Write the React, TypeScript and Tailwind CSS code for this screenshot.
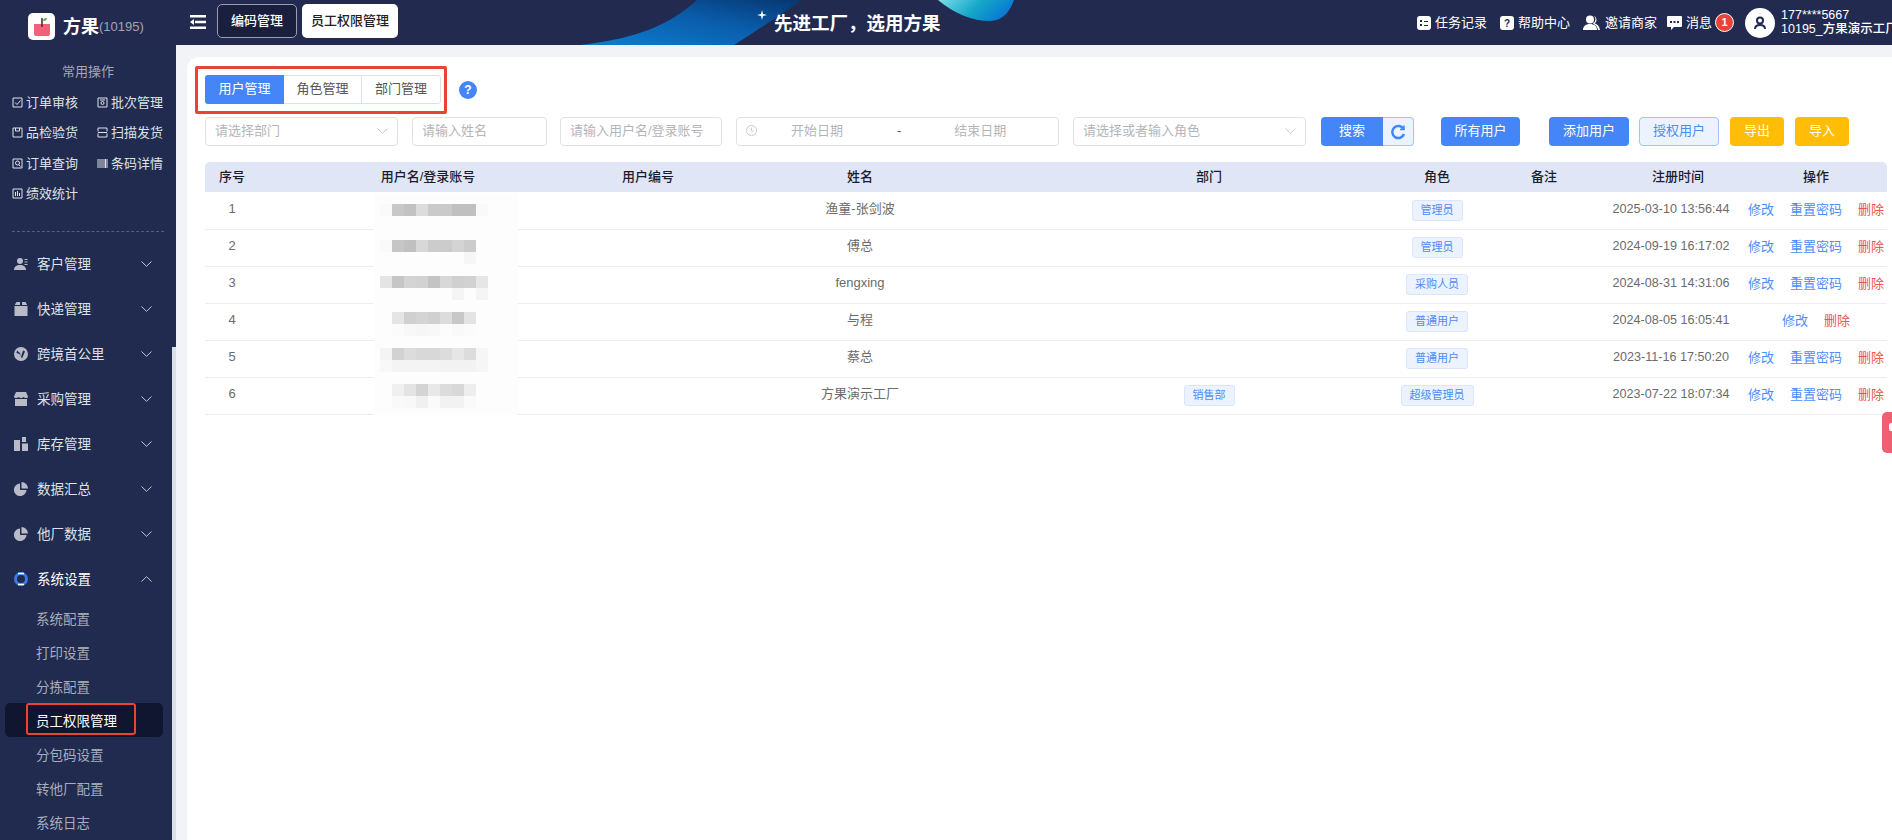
import React from "react";

const font = { fontFamily: '"Liberation Sans", "Noto Sans CJK SC", sans-serif' };

const Chevron = ({ up = false }: { up?: boolean }) => (
  <svg width="11" height="6" viewBox="0 0 11 6" fill="none" stroke="#c3c6d2" strokeWidth="1">
    <path d={up ? "M0.5 5.5 L5.5 0.7 L10.5 5.5" : "M0.5 0.5 L5.5 5.3 L10.5 0.5"} />
  </svg>
);

const quickIcons: Record<string, React.ReactNode> = {
  check: <path d="M1 1h9v9H1z M3 5.5l2 2 3.5-4" />,
  batch: <path d="M1 1h9v9H1z M3 3h5 M4 6a1.5 1.5 0 1 0 3 0a1.5 1.5 0 1 0-3 0" />,
  box: <path d="M1 1h9v9H1z M3.5 1v3h4V1" />,
  scan: <path d="M1 4.5V1h9v3.5 M1 6.5V10h9V6.5 M1 5.5h9" />,
  search: <path d="M1 1h9v9H1z M3.5 5a2 2 0 1 0 4 0a2 2 0 1 0-4 0 M7 7l1.5 1.5" />,
  bars: <path d="M1 1v9 M3 1v9 M5 1v9 M7 1v9 M8.5 1v9 M10 1v9" />,
  chart: <path d="M1 1h9v9H1z M3.5 4v4 M5.5 3v5 M7.5 5v3" />,
};

const quick = [
  { label: "订单审核", icon: "check" },
  { label: "批次管理", icon: "batch" },
  { label: "品检验货", icon: "box" },
  { label: "扫描发货", icon: "scan" },
  { label: "订单查询", icon: "search" },
  { label: "条码详情", icon: "bars" },
  { label: "绩效统计", icon: "chart" },
];

const menuIcons: Record<string, React.ReactNode> = {
  user: (
    <>
      <circle cx="6" cy="4" r="3" />
      <path d="M0 13c0-3.500 2.500-5 6-5s6 1.500 6 5z" />
      <path d="M10.500 2h3v1h-3z M10.500 4.500h3v1h-3z M10.500 7h3v1h-3z" />
    </>
  ),
  parcel: <path d="M1 2.500 2.500 0h3.500v3H1z M8 0h3.500L13 2.500v.5H8z M0.500 4h13v10h-13z" />,
  globe: (
    <>
      <path fillRule="evenodd" d="M7 0a7 7 0 1 0 0 14A7 7 0 0 0 7 0zM3 3.500l3 2.500 1 4 2-6.500 2 1-3 7-2.500-4.500-3-1z" />
    </>
  ),
  shop: <path d="M2 0h10l2 4.500c0 1-1 1.500-2 1.500s-1.800-.5-2.500-1c-.7.5-1.500 1-2.500 1s-1.800-.5-2.500-1c-.7.500-1.500 1-2.500 1S0 5.500 0 4.500z M1 7h12v7H1z" />,
  stock: <path d="M0 3h6v11H0z M8 0h4v5H8z M8 6.500h6V14H8z" />,
  pie: <path d="M6 1.500A6.300 6.300 0 1 0 12.500 8H6z M7.500 0v6.500H14A6.500 6.500 0 0 0 7.500 0z" />,
};

const menus = [
  { label: "客户管理", icon: "user" },
  { label: "快递管理", icon: "parcel" },
  { label: "跨境首公里", icon: "globe" },
  { label: "采购管理", icon: "shop" },
  { label: "库存管理", icon: "stock" },
  { label: "数据汇总", icon: "pie" },
  { label: "他厂数据", icon: "pie" },
];

const subMenus = ["系统配置", "打印设置", "分拣配置", "员工权限管理", "分包码设置", "转他厂配置", "系统日志"];

function Sidebar() {
  return (
    <aside className="relative w-[176px] shrink-0 bg-[#202b4f] overflow-hidden">
      <div className="pt-[12px] h-[42px] text-center text-[13px] leading-[30px] text-[#a4a8b8]">常用操作</div>
      <div className="grid grid-cols-[85px_80px] pl-[12px]">
        {quick.map((q) => (
          <div key={q.label} className="flex items-center h-[30.5px] gap-[3px] text-[13px] text-[#dfe1e8]">
            <svg width="11" height="11" viewBox="0 0 11 11" fill="none" stroke="#dfe1e8" strokeWidth="1">
              {quickIcons[q.icon]}
            </svg>
            <span>{q.label}</span>
          </div>
        ))}
      </div>
      <div className="mt-[22px] mx-[12px] w-[152px] border-t border-dashed border-[#565e7c]" />
      <div className="mt-[9px]">
        {menus.map((m) => (
          <div key={m.label} className="flex items-center h-[45px] pl-[14px] pr-[24px] text-[13.500px] text-[#dfe1e8]">
            <svg width="14" height="14" viewBox="0 0 14 14" fill="#b8bbc7">
              {menuIcons[m.icon]}
            </svg>
            <span className="ml-[9px] flex-1 translate-y-[2px]">{m.label}</span>
            <Chevron />
          </div>
        ))}
        <div className="flex items-center h-[45px] pl-[14px] pr-[24px] text-[13.500px] text-white">
          <svg width="14" height="14" viewBox="0 0 14 14" fill="none">
            <circle cx="7" cy="7" r="5.500" stroke="#3b7be8" strokeWidth="3" />
            <path d="M4 12.500h6 M4 1.500h6" stroke="#ffffff" strokeWidth="1.500" />
          </svg>
          <span className="ml-[9px] flex-1 translate-y-[2px]">系统设置</span>
          <Chevron up />
        </div>
        {subMenus.map((s) =>
          s === "员工权限管理" ? (
            <div key={s} className="relative flex items-center h-[34px] ml-[5px] w-[158px] pl-[31px] rounded-[5px] bg-[#101530] text-[13.500px] text-white">
              <span className="translate-y-[2px]">{s}</span>
              <div className="absolute left-[21px] top-0 w-[110px] h-[32px] border-2 border-[#ea4335] rounded-[3px]" />
            </div>
          ) : (
            <div key={s} className="flex items-center h-[34px] pl-[36px] text-[13.500px] text-[#a9adbc]">
              <span className="translate-y-[2px]">{s}</span>
            </div>
          ),
        )}
      </div>
      <div className="absolute right-0 top-[302px] bottom-0 w-[4px] bg-[#dddfe8]" />
    </aside>
  );
}

function Banner() {
  return (
    <div className="absolute inset-0 overflow-hidden pointer-events-none">
      <svg className="absolute left-[570px] top-0" width="460" height="45" viewBox="0 0 460 45">
        <defs>
          <linearGradient id="sw" x1="0" y1="1" x2="1" y2="0">
            <stop offset="0" stopColor="#0d7fd0" />
            <stop offset="0.55" stopColor="#0a5dac" />
            <stop offset="1" stopColor="#06366f" />
          </linearGradient>
          <linearGradient id="cy" x1="0" y1="0" x2="1" y2="0.3">
            <stop offset="0" stopColor="#7fdcea" />
            <stop offset="0.55" stopColor="#14a8c8" />
            <stop offset="1" stopColor="#0a78d4" />
          </linearGradient>
        </defs>
        <path d="M11 45C70 38 100 24 127 0H232C205 18 185 32 164 45Z" fill="url(#sw)" />
        <path d="M368 0C385 14 402 21 420 21C432 21 440 12 444 0Z" fill="url(#cy)" />
      </svg>
      <svg className="absolute left-[757px] top-[10px]" width="10" height="10" viewBox="0 0 10 10" fill="#ffffff">
        <path d="M5 0 6 4 10 5 6 6 5 10 4 6 0 5 4 4z" />
      </svg>
      <div className="absolute left-[774px] top-[9px] text-[18.500px] leading-[30px] font-bold text-white whitespace-nowrap">先进工厂，选用方果</div>
    </div>
  );
}

function TopBar() {
  return (
    <header className="relative flex items-center h-[45px] shrink-0 bg-[#222b4f] overflow-hidden">
      <Banner />
      <div className="relative flex items-center w-[176px] pt-[8px] pl-[28px] shrink-0">
        <div className="flex items-center justify-center w-[27px] h-[27px] rounded-[5px] bg-white">
          <svg width="18" height="19" viewBox="0 0 18 19">
            <path d="M1 7h16v10a2 2 0 0 1-2 2H3a2 2 0 0 1-2-2z" fill="#f2607a" />
            <path d="M9 1v9" stroke="#3a2d2d" strokeWidth="1.500" />
            <path d="M10 4c0-2 1.500-3 4-3 0 2-1.500 3-4 3z" fill="#52a848" />
          </svg>
        </div>
        <span className="ml-[8px] text-[18px] font-bold text-white translate-y-[1px]">方果</span>
        <span className="text-[13px] text-[#a0a5b8]">(10195)</span>
      </div>
      <svg className="relative ml-[14px] -mt-[1px]" width="16" height="14" viewBox="0 0 16 14" fill="#ffffff">
        <path d="M0 0h16v2.500H0z M5 5.750h11v2.500H5z M0 11.500h16V14H0z M4 4v6L0 7z" />
      </svg>
      <div className="relative ml-[11px] -mt-[3px] flex items-center justify-center w-[80px] h-[34px] rounded-[5px] border border-[#9a9eb0] bg-[#1a1f3d] text-[13px] font-medium text-white">编码管理</div>
      <div className="relative ml-[5px] -mt-[3px] flex items-center justify-center w-[96px] h-[34px] rounded-[5px] bg-white text-[13px] font-medium text-[#222]">员工权限管理</div>
      <div className="relative ml-auto flex items-center text-[13px] text-white shrink-0 w-[475px] whitespace-nowrap">
        <div className="flex items-center gap-[4px] shrink-0">
          <svg width="14" height="14" viewBox="0 0 14 14">
            <rect width="14" height="14" rx="3" fill="#fff" />
            <path d="M3 4h2v2H3z M3 8h2v2H3z M7 5h4v1H7z M7 9h4v1H7z" fill="#222b4f" />
          </svg>
          <span>任务记录</span>
        </div>
        <div className="ml-[13px] flex items-center gap-[4px] shrink-0">
          <svg width="14" height="14" viewBox="0 0 14 14">
            <rect width="14" height="14" rx="3" fill="#fff" />
            <text x="7" y="11" textAnchor="middle" fontSize="10" fontWeight="700" fill="#222b4f" fontFamily="Liberation Sans">?</text>
          </svg>
          <span>帮助中心</span>
        </div>
        <div className="ml-[13px] flex items-center gap-[5px] shrink-0">
          <svg width="17" height="15" viewBox="0 0 17 15" fill="#fff">
            <circle cx="7" cy="4.500" r="4" />
            <path d="M0 15c0-4 3-6 7-6s7 2 7 6z" />
            <path d="M10.500 .8a4 4 0 0 1 1 7.400c3 1 5 3 5.500 6.800h-2c-.5-3-2-5-4.500-6l-.5-1a4 4 0 0 0 .5-7.200z" />
          </svg>
          <span>邀请商家</span>
        </div>
        <div className="ml-[10px] flex items-center gap-[4px] shrink-0">
          <svg width="15" height="15" viewBox="0 0 15 15">
            <path d="M0 2a1 1 0 0 1 1-1h13a1 1 0 0 1 1 1v9a1 1 0 0 1-1 1H7l-3 3v-3H1a1 1 0 0 1-1-1z" fill="#fff" />
            <path d="M3 6h2v2H3z M6.500 6h2v2h-2z M10 6h2v2h-2z" fill="#222b4f" />
          </svg>
          <span>消息</span>
        </div>
        <div className="ml-[3px] flex items-center justify-center w-[19px] h-[19px] shrink-0 rounded-full border border-white bg-[#ea4335] text-[11px] font-bold text-white">1</div>
        <div className="ml-[11px] flex items-center justify-center w-[30px] h-[30px] shrink-0 rounded-full bg-white">
          <svg width="14" height="14" viewBox="0 0 14 14" fill="none" stroke="#222b4f" strokeWidth="2">
            <circle cx="7" cy="4.500" r="3" />
            <path d="M2 13c0-3 2-4 5-4s5 1 5 4" />
          </svg>
        </div>
        <div className="ml-[6px] pb-[2px] text-[12.500px] leading-[14px] font-medium">
          <div>177****5667</div>
          <div>10195_方果演示工厂</div>
        </div>
      </div>
    </header>
  );
}

const fieldClass = "flex items-center h-[29px] rounded-[4px] border border-[#dfe1e8] bg-white px-[9px] pb-[2px] text-[13px] text-[#b3b5bc]";
const primaryBtn = "flex items-center justify-center h-[29px] pb-[2px] rounded-[4px] bg-[#4486f8] text-[13px] text-white";
const yellowBtn = "flex items-center justify-center h-[29px] pb-[2px] w-[54px] rounded-[4px] bg-[#ffbd07] text-[13px] text-white";

function Filters() {
  return (
    <div className="flex items-center h-[29px] mt-[13px] ml-[18px]">
      <div className={`${fieldClass} w-[193px] justify-between pr-[9px]`}>
        <span>请选择部门</span>
        <Chevron />
      </div>
      <div className={`${fieldClass} w-[135px] ml-[14px]`}>请输入姓名</div>
      <div className={`${fieldClass} w-[162px] ml-[13px]`}>请输入用户名/登录账号</div>
      <div className={`${fieldClass} w-[323px] ml-[14px]`}>
        <svg width="11" height="11" viewBox="0 0 12 12" fill="none" stroke="#c4c6cc">
          <circle cx="6" cy="6" r="5.500" />
          <path d="M6 3v3.500h2.500" />
        </svg>
        <span className="ml-[34px]">开始日期</span>
        <span className="ml-[54px] text-[#555]">-</span>
        <span className="ml-[53px]">结束日期</span>
      </div>
      <div className={`${fieldClass} w-[233px] ml-[14px] justify-between pr-[9px]`}>
        <span>请选择或者输入角色</span>
        <Chevron />
      </div>
      <div className={`${primaryBtn} w-[62px] ml-[15px] rounded-r-none`}>搜索</div>
      <div className="flex items-center justify-center h-[29px] w-[31px] rounded-r-[4px] border border-l-0 border-[#a2c3fb] bg-[#ecf3fe]">
        <svg width="16" height="16" viewBox="0 0 16 16" fill="none" stroke="#4486f8" strokeWidth="2.500">
          <path d="M13.500 5A6 6 0 1 0 14 10" />
          <path d="M14 1.500v4H10" strokeWidth="1.500" />
        </svg>
      </div>
      <div className={`${primaryBtn} w-[79px] ml-[27px]`}>所有用户</div>
      <div className={`${primaryBtn} w-[80px] ml-[29px]`}>添加用户</div>
      <div className="flex items-center justify-center h-[29px] w-[80px] ml-[10px] pb-[2px] rounded-[4px] border border-[#a2c3fb] bg-[#ecf3fe] text-[13px] text-[#4c8dfa]">授权用户</div>
      <div className={`${yellowBtn} ml-[11px]`}>导出</div>
      <div className={`${yellowBtn} ml-[11px]`}>导入</div>
    </div>
  );
}

const columns = ["序号", "用户名/登录账号", "用户编号", "姓名", "部门", "角色", "备注", "注册时间", "操作"];

const rows = [
  { id: 1, name: "渔童-张剑波", dept: "", role: "管理员", time: "2025-03-10 13:56:44", reset: true },
  { id: 2, name: "傅总", dept: "", role: "管理员", time: "2024-09-19 16:17:02", reset: true },
  { id: 3, name: "fengxing", dept: "", role: "采购人员", time: "2024-08-31 14:31:06", reset: true },
  { id: 4, name: "与程", dept: "", role: "普通用户", time: "2024-08-05 16:05:41", reset: false },
  { id: 5, name: "蔡总", dept: "", role: "普通用户", time: "2023-11-16 17:50:20", reset: true },
  { id: 6, name: "方果演示工厂", dept: "销售部", role: "超级管理员", time: "2023-07-22 18:07:34", reset: true },
];

const Tag = ({ text }: { text: string }) => (
  <span className="inline-flex items-center h-[21px] px-[8px] rounded-[3px] border border-[#d9e6fb] bg-[#ecf3fe] text-[11px] text-[#4c8dfa]">{text}</span>
);

// pixelated cover over the account column: [y, startX, colours]
const mosaic: [number, number, string[]][] = [
  [11, 6, ["#fafafa", "#c8c8c8", "#c2c2c2", "#dcdcdc", "#cacaca", "#cacaca", "#c0c0c0", "#c0c0c0", "#f9f9f9"]],
  [47, 6, ["#fafafa", "#c6c6c6", "#c0c0c0", "#d8d8d8", "#cccccc", "#cccccc", "#d4d4d4", "#cccccc"]],
  [59, 90, ["#f6f6f6"]],
  [83, 6, ["#e4e4e4", "#c6c6c6", "#d4d4d4", "#d2d2d2", "#c4c4c4", "#d8d8d8", "#d0d0d0", "#d2d2d2", "#e6e6e6"]],
  [95, 78, ["#f5f5f5", "#fdfdfd", "#f5f5f5"]],
  [119, 18, ["#e4e6e6", "#d0d0d0", "#d4d4d4", "#d0d0d0", "#dcdcdc", "#c8c8c8", "#e4e4e4"]],
  [131, 18, ["#fbfbfb", "#f8f8f8", "#f6f6f6", "#f8f8f8", "#fcfcfc", "#f9f9f9", "#fbfbfb"]],
  [155, 6, ["#f4f4f4", "#d2d2d2", "#dcdcdc", "#d8d8d8", "#d8d8d8", "#dcdcdc", "#e6e6e6", "#dcdcdc", "#f6f6f6"]],
  [167, 6, ["#f8f8f8", "#f4f4f4", "#f4f4f4", "#f4f4f4", "#f4f4f4", "#f2f2f2", "#f2f2f2", "#f2f2f2", "#f6f6f6"]],
  [191, 18, ["#f0f0f0", "#e4e4e4", "#d4d4d4", "#e8e8e8", "#dcdcdc", "#d8d8d8", "#eeeeee"]],
  [203, 18, ["#f9f9f9", "#f8f8f8", "#f0f0f0", "#fafafa", "#f2f2f2", "#f2f2f2", "#fafafa"]],
];

function Mosaic() {
  return (
    <div className="absolute left-[169px] top-[31px] w-[144px] h-[222px] bg-[#fdfdfd]">
      {mosaic.map(([y, x, colours]) => (
        <div key={y} className="absolute flex" style={{ top: y, left: x }}>
          {colours.map((c, i) => (
            <div key={i} className="w-[12px] h-[12px]" style={{ backgroundColor: c }} />
          ))}
        </div>
      ))}
    </div>
  );
}

function UserTable() {
  return (
    <div className="relative mt-[16px] ml-[18px] w-[1682px]">
      <table className="w-full table-fixed border-collapse">
        <colgroup>
          <col className="w-[54px]" />
          <col className="w-[338px]" />
          <col className="w-[102px]" />
          <col className="w-[322px]" />
          <col className="w-[376px]" />
          <col className="w-[80px]" />
          <col className="w-[134px]" />
          <col className="w-[134px]" />
          <col className="w-[142px]" />
        </colgroup>
        <thead>
          <tr className="h-[30px] bg-[#e1e6f6]">
            {columns.map((c, i) => (
              <th key={c} className={`p-0 pb-[1px] text-center text-[13px] font-medium text-[#1a1d2e] ${i === 0 ? "rounded-tl-[5px]" : ""} ${i === 8 ? "rounded-tr-[5px]" : ""}`}>
                {c}
              </th>
            ))}
          </tr>
        </thead>
        <tbody>
          {rows.map((r) => (
            <tr key={r.id} className="h-[37px] border-b border-[#ecedf3] text-[13px] text-[#6b6b6b]">
              <td className="p-0 pb-[3px] text-center">{r.id}</td>
              <td />
              <td />
              <td className="p-0 pb-[3px] text-center">{r.name}</td>
              <td className="p-0 text-center">{r.dept && <Tag text={r.dept} />}</td>
              <td className="p-0 text-center">
                <Tag text={r.role} />
              </td>
              <td />
              <td className="p-0 pb-[2px] pr-[14px] text-center whitespace-nowrap text-[12.600px]">{r.time}</td>
              <td className="p-0 pb-[2px]">
                <div className="flex justify-center gap-[16px] text-[13px] whitespace-nowrap">
                  <span className="text-[#4c8dfa]">修改</span>
                  {r.reset && <span className="text-[#4c8dfa]">重置密码</span>}
                  <span className="text-[#f0564a]">删除</span>
                </div>
              </td>
            </tr>
          ))}
        </tbody>
      </table>
      <Mosaic />
    </div>
  );
}

export default function App() {
  return (
    <div className="flex flex-col w-[1892px] h-[840px] overflow-hidden bg-[#f2f3f7]" style={font}>
      <TopBar />
      <div className="flex flex-1 min-h-0">
        <Sidebar />
        <main className="relative flex-1 ml-[11px] mt-[12px] bg-white rounded-tl-[12px]">
          <div className="flex items-center pt-[18px] pl-[18px]">
            <div className="flex h-[29px] w-[236px] rounded-[3px] border border-[#dfe1e8] text-[13px] text-[#555]">
              <div className="flex items-center justify-center w-[79px] -ml-px -my-px h-[29px] pb-[2px] rounded-l-[3px] bg-[#4486f8] text-white">用户管理</div>
              <div className="flex items-center justify-center w-[78px] pb-[2px] border-r border-[#dfe1e8]">角色管理</div>
              <div className="flex items-center justify-center flex-1 pb-[2px]">部门管理</div>
            </div>
            <div className="ml-[18px] flex items-center justify-center w-[18px] h-[18px] rounded-full bg-[#4486f8] text-[12px] font-bold text-white">?</div>
          </div>
          <div className="absolute left-[8px] top-[9px] w-[252px] h-[48px] border-[3px] border-[#ea4335] rounded-[2px]" />
          <Filters />
          <UserTable />
          <div className="absolute right-0 top-[355px] w-[10px] h-[41px] rounded-l-[5px] bg-[#ee5f72]">
            <div className="absolute left-[7px] top-[11px] w-[3px] h-[8px] rounded-l-[2px] bg-white" />
          </div>
        </main>
      </div>
    </div>
  );
}
